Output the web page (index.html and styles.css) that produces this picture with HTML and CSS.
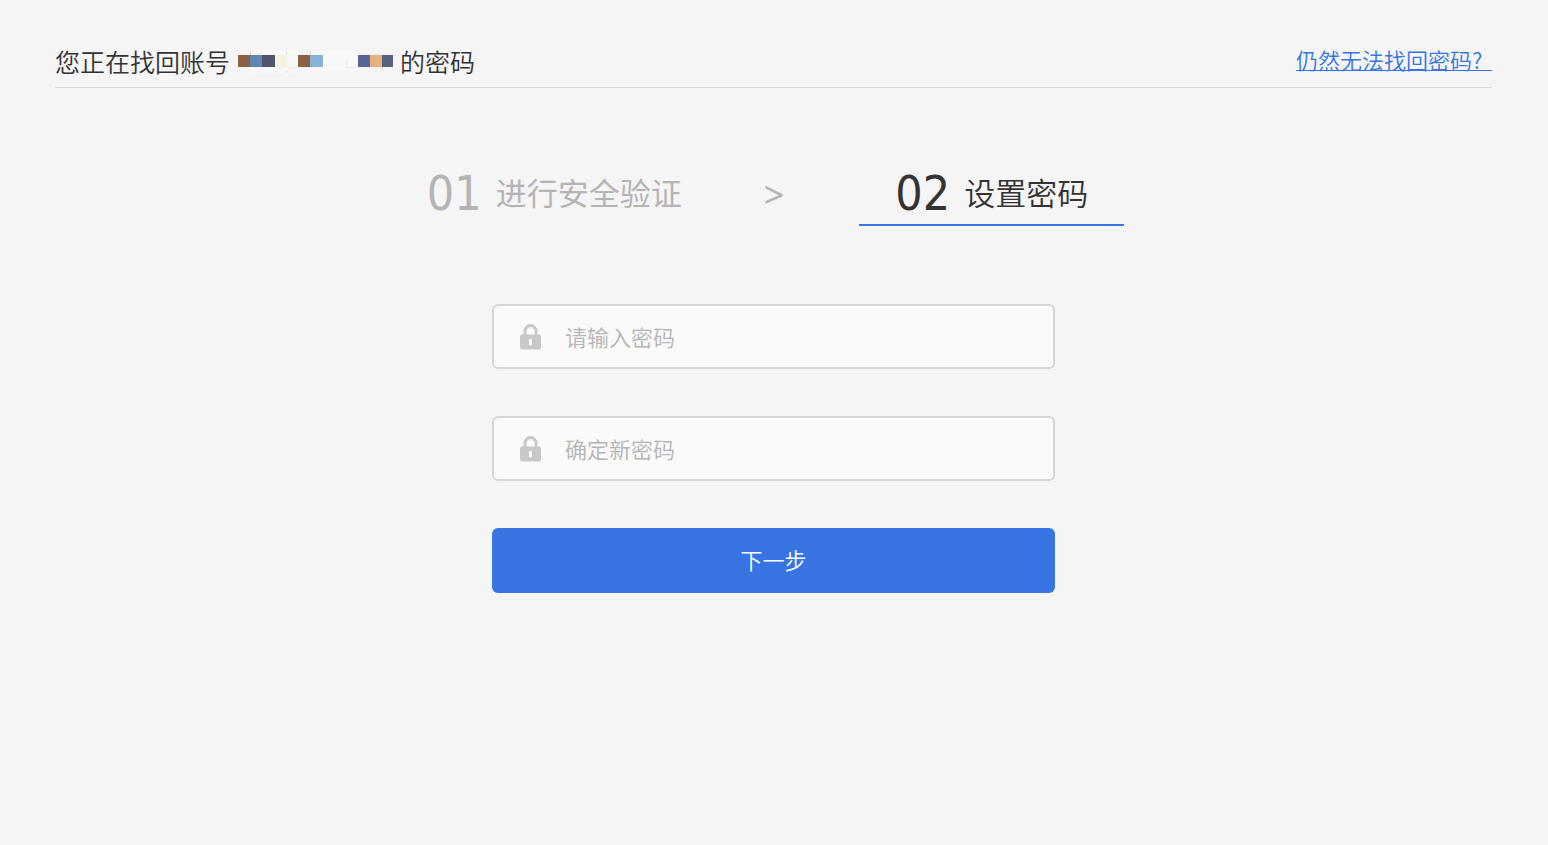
FILE: index.html
```html
<!DOCTYPE html>
<html lang="zh-CN">
<head>
<meta charset="utf-8">
<meta name="viewport" content="width=device-width, initial-scale=1">
<title>设置密码</title>
<link rel="stylesheet" href="styles.css">
</head>
<body>
<div class="page">
  <header class="header">
    <p class="account">
      <span>您正在找回账号</span>
      <svg class="mask" viewBox="0 0 156 24" aria-hidden="true" shape-rendering="crispEdges">
        <path fill="#f8f8f8" d="M12 0h49v24H12zM85 2h35v20H85z"/>
        <path fill="#8b6045" d="M0 6h12v12H0zM60 6h12v12H60z"/>
        <path fill="#5f87b4" d="M12 6h12v12H12z"/>
        <path fill="#525570" d="M24 6h13v12H24z"/>
        <path fill="#f3f3de" d="M37 6h12v12H37z"/>
        <path fill="#86b4d8" d="M72 6h13v12H72z"/>
        <path fill="#57659a" d="M120 6h12v12h-12z"/>
        <path fill="#e5b27e" d="M132 6h12v12h-12z"/>
        <path fill="#566280" d="M144 6h11v12h-11z"/>
        <path fill="#d8d8d8" d="M48 3h1v2h-1zM48 22h1v2h-1z"/>
        <path fill="#ead2b8" d="M12 2h1v4h-1zM72 2h1v4h-1zM144 18h1v3h-1z"/>
        <path fill="#ececec" d="M50 18h9v1h-9zM109 18h9v1h-9zM108 9h1v9h-1z"/>
      </svg>
      <span>的密码</span>
    </p>
    <a class="help" href="#">仍然无法找回密码?&nbsp;&nbsp;</a>
  </header>

  <main>
    <ol class="steps">
      <li class="step"><span class="num">01</span><span class="label">进行安全验证</span></li>
      <li class="arrow" aria-hidden="true">&gt;</li>
      <li class="step current" aria-current="step"><span class="num">02</span><span class="label">设置密码</span></li>
    </ol>

    <form class="form">
      <label class="field">
        <svg class="lock" viewBox="0 0 21 26" aria-hidden="true">
          <path fill="none" stroke="#c8c8c8" stroke-width="3" d="M5 12V7.5a5.5 6 0 0 1 11 0V12"/>
          <path fill="#c8c8c8" fill-rule="evenodd" d="M2 10.500h17a2 2 0 0 1 2 2V23a2.500 2.500 0 0 1-2.500 2.500h-16A2.500 2.500 0 0 1 0 23V12.500a2 2 0 0 1 2-2zM10.500 14.500q-1.500 0-1.500 2v3.500q0 1.500 1.500 1.500t1.500-1.500v-3.500q0-2-1.500-2z"/>
        </svg>
        <input type="password" placeholder="请输入密码" aria-label="请输入密码">
      </label>
      <label class="field">
        <svg class="lock" viewBox="0 0 21 26" aria-hidden="true">
          <path fill="none" stroke="#c8c8c8" stroke-width="3" d="M5 12V7.5a5.5 6 0 0 1 11 0V12"/>
          <path fill="#c8c8c8" fill-rule="evenodd" d="M2 10.500h17a2 2 0 0 1 2 2V23a2.500 2.500 0 0 1-2.500 2.500h-16A2.500 2.500 0 0 1 0 23V12.500a2 2 0 0 1 2-2zM10.500 14.500q-1.500 0-1.500 2v3.500q0 1.500 1.500 1.500t1.500-1.500v-3.500q0-2-1.500-2z"/>
        </svg>
        <input type="password" placeholder="确定新密码" aria-label="确定新密码">
      </label>
      <button class="submit" type="submit">下一步</button>
    </form>
  </main>
</div>
</body>
</html>
```
FILE: styles.css
```css
* {
  box-sizing: border-box;
}

body {
  margin: 0;
  background: #f5f5f5;
  color: #333;
  font-family: "Noto Sans CJK SC", sans-serif;
  font-weight: 350;
}

.page {
  padding: 43px 56px 48px 55px;
}

.header {
  display: flex;
  justify-content: space-between;
  align-items: flex-start;
  padding-bottom: 8px;
  border-bottom: 1px solid #d9d9d9;
}

.account {
  display: flex;
  align-items: center;
  margin: 0;
  font-size: 25px;
  line-height: 36px;
}

.mask {
  width: 156px;
  height: 24px;
  margin: 0 6px 0 8px;
}

.help {
  color: #3875e2;
  font-size: 22px;
  line-height: 32px;
  text-decoration: underline;
  text-decoration-thickness: 1px;
}

.steps {
  display: flex;
  justify-content: center;
  margin: 77px 0 0;
  padding: 0 0 0 4px;
  list-style: none;
}

.step {
  display: flex;
  align-items: flex-start;
  gap: 14px;
  height: 61px;
  padding: 3px 36px 0 0;
  color: #b4b4b4;
}

.num {
  font-family: "DejaVu Sans Condensed", "Noto Sans", sans-serif;
  font-size: 48px;
  font-weight: 400;
  line-height: 50px;
}

.label {
  font-size: 31px;
  line-height: 48px;
  font-weight: 400;
}

.arrow {
  padding: 0 75px 0 46px;
  color: #b4b4b4;
  font-family: "Noto Sans", sans-serif;
  font-size: 36px;
  font-weight: 400;
  line-height: 60px;
}

.current {
  padding-left: 36px;
  color: #333;
  border-bottom: 2px solid #3875e2;
}

.current .label {
  font-weight: 350;
}

.form {
  display: flex;
  flex-direction: column;
  gap: 47px;
  max-width: 563px;
  margin: 78px auto 0;
}

.field {
  display: flex;
  align-items: center;
  height: 65px;
  padding: 0 26px;
  background: #fafafa;
  border: 2px solid #d6d6d6;
  border-radius: 6px;
}

.lock {
  flex: none;
  width: 21px;
  height: 26px;
}

.field input {
  flex: 1;
  min-width: 0;
  margin-left: 24px;
  padding: 0 0 2px;
  border: 0;
  outline: 0;
  background: none;
  color: #333;
  font: inherit;
  font-size: 22px;
  line-height: 32px;
}

.field input::placeholder {
  color: #b4b4b4;
  opacity: 1;
}

.submit {
  height: 65px;
  padding: 0 0 3px;
  border: 0;
  border-radius: 6px;
  background: #3875e2;
  color: #fff;
  font: inherit;
  font-size: 22px;
  cursor: pointer;
}
```
